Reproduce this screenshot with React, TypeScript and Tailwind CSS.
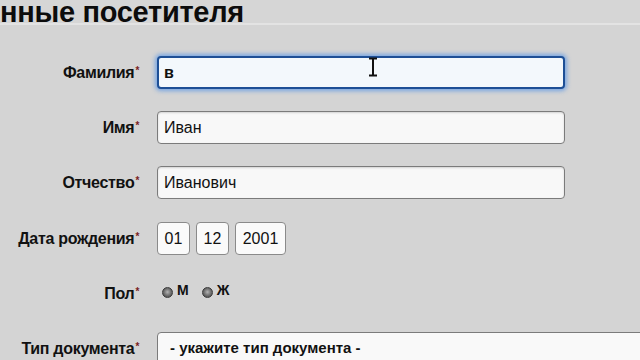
/**
 * Visitor form
 * Personal data block of the visitor registration page
 */

const labelCls = 'w-[139px] shrink-0 text-right text-[16px] font-bold text-[#111] tracking-[-0.3px]';
const inputCls =
  'h-[33px] w-[408px] shrink-0 rounded-[4px] border border-[#7b7b7b] bg-[#f8f8f8] px-[6px] text-[16px] text-[#111] outline-none shadow-[inset_0_1px_2px_rgba(0,0,0,0.15)]';
const dateCls =
  'h-[33px] rounded-[4px] border border-[#8a8a8a] bg-[#fafafa] text-center text-[16px] text-[#111] outline-none';

function Label({ text }: { text: string }) {
  return (
    <div className={labelCls}>
      {text}
      <span className="relative -top-[4px] ml-px text-[10px] text-[#7a1f1f]">*</span>
    </div>
  );
}

function Radio({ label }: { label: string }) {
  return (
    <label className="flex items-center gap-[4px]">
      <span className="mt-[3px] h-[11px] w-[11px] rounded-full border border-[#3a3a3a] bg-[radial-gradient(circle_at_50%_45%,#b4b4b4_0%,#777_45%,#3c3c3c_100%)]" />
      <span className="-mt-[2px] text-[14px] font-bold text-[#111]">{label}</span>
    </label>
  );
}

export default function App() {
  return (
    <div
      className="h-[360px] w-[640px] overflow-hidden bg-[#d4d4d4]"
      style={{ fontFamily: '"Liberation Sans", Arial, sans-serif' }}
    >
      <div className="h-[31px] border-b-2 border-[#e3e3e3] bg-[#d6d6d6]">
        <h1 className="-mt-[6px] text-[29px] font-bold leading-[36px] tracking-[-0.3px] text-[#0c0c0c]">
          нные посетителя
        </h1>
      </div>

      <div className="flex flex-col gap-[22px] pt-[31px]">
        <div className="flex h-[33px] items-center gap-[18px]">
          <Label text="Фамилия" />
          <div className="relative shrink-0">
            <input
              defaultValue="в"
              className="h-[33px] w-[408px] rounded-[4px] border-2 border-[#1d4f96] bg-[#f3f8fc] px-[5px] text-[16px] font-bold text-[#111] outline-none shadow-[0_0_4px_2px_rgba(90,150,230,0.75)]"
            />
            <svg className="pointer-events-none absolute left-[211px] top-[1px]" width="10" height="20" viewBox="0 0 10 20">
              <path d="M1 1.5h8M1 18.5h8M5 1.5v17" stroke="#111" strokeWidth="2" fill="none" />
            </svg>
          </div>
        </div>

        <div className="flex h-[33px] items-center gap-[18px]">
          <Label text="Имя" />
          <input defaultValue="Иван" className={inputCls} />
        </div>

        <div className="flex h-[33px] items-center gap-[18px]">
          <Label text="Отчество" />
          <input defaultValue="Иванович" className={inputCls} />
        </div>

        <div className="mt-px flex h-[33px] items-center gap-[18px]">
          <Label text="Дата рождения" />
          <div className="flex shrink-0 gap-[6px]">
            <input defaultValue="01" className={`${dateCls} w-[33px]`} />
            <input defaultValue="12" className={`${dateCls} w-[33px]`} />
            <input defaultValue="2001" className={`${dateCls} w-[51px]`} />
          </div>
        </div>

        <div className="flex h-[33px] items-center gap-[18px]">
          <Label text="Пол" />
          <div className="-mt-[5px] ml-[5px] flex shrink-0 items-center gap-[13px]">
            <Radio label="М" />
            <Radio label="Ж" />
          </div>
        </div>

        <div className="flex h-[33px] items-center gap-[18px]">
          <Label text="Тип документа" />
          <div className="flex h-[33px] w-[500px] shrink-0 items-center rounded-[4px] border border-[#7b7b7b] bg-[#f9f9f9] px-[12px] text-[15px] font-bold text-[#111]">
            - укажите тип документа -
          </div>
        </div>
      </div>
    </div>
  );
}
